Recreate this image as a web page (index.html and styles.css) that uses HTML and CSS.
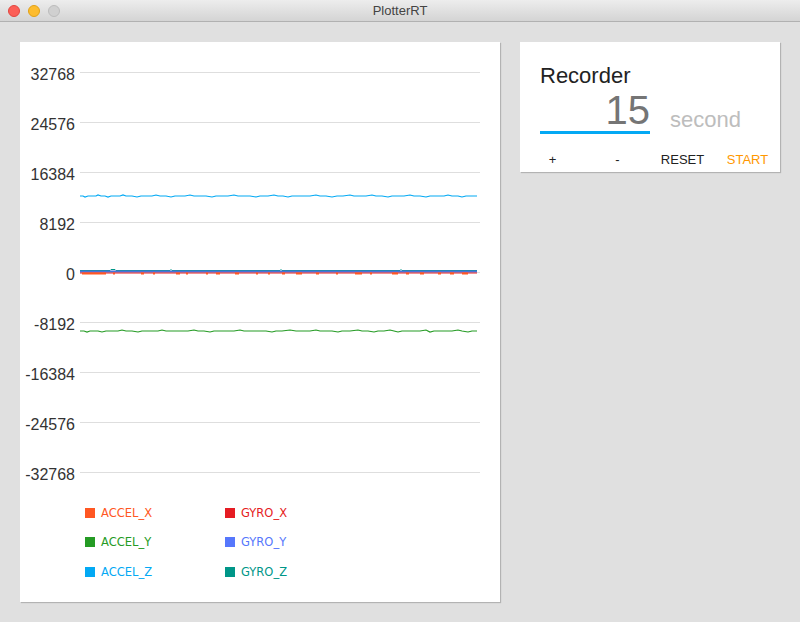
FILE: index.html
```html
<!DOCTYPE html>
<html>
<head>
<meta charset="utf-8">
<title>PlotterRT</title>
<link rel="stylesheet" href="styles.css">
</head>
<body>
<div class="window">
  <header class="titlebar">
    <div class="lights">
      <span class="light red"></span>
      <span class="light yellow"></span>
      <span class="light gray"></span>
    </div>
    <div class="title">PlotterRT</div>
  </header>
  <main class="content">
    <section class="card chart-card">
      <svg class="chart" width="480" height="456" viewBox="0 0 480 456">
        <g class="grid">
          <line x1="60" y1="30.5" x2="460" y2="30.5"/>
          <line x1="60" y1="80.5" x2="460" y2="80.5"/>
          <line x1="60" y1="130.5" x2="460" y2="130.5"/>
          <line x1="60" y1="180.5" x2="460" y2="180.5"/>
          <line x1="60" y1="230.5" x2="460" y2="230.5"/>
          <line x1="60" y1="280.5" x2="460" y2="280.5"/>
          <line x1="60" y1="330.5" x2="460" y2="330.5"/>
          <line x1="60" y1="380.5" x2="460" y2="380.5"/>
          <line x1="60" y1="430.5" x2="460" y2="430.5"/>
        </g>
        <g class="labels">
          <text x="55" y="38">32768</text>
          <text x="55" y="88">24576</text>
          <text x="55" y="138">16384</text>
          <text x="55" y="188">8192</text>
          <text x="55" y="238">0</text>
          <text x="55" y="288">-8192</text>
          <text x="55" y="338">-16384</text>
          <text x="55" y="388">-24576</text>
          <text x="55" y="438">-32768</text>
        </g>
        <polyline class="s accel-z" points="60,154 63,154 65,155 68,154 72,154 76,154 78,153 81,154 85,154 88,155 91,154 96,154 100,154 103,153 106,154 112,154 117,155 121,154 127,154 132,154 136,153 140,154 146,154 151,155 155,154 160,154 165,154 170,153 174,154 180,154 186,154 192,155 196,154 203,154 208,154 214,153 218,154 224,154 230,154 236,155 240,154 248,154 254,153 258,154 263,154 268,155 272,154 278,154 284,154 290,154 296,153 300,154 306,154 312,155 317,154 323,154 330,153 334,154 340,154 346,154 352,153 356,154 362,154 368,155 372,154 378,154 384,154 390,153 394,154 400,154 406,155 410,154 416,154 424,154 428,153 432,154 438,154 442,155 446,154 452,154 457,154"/>
        <polyline class="s accel-y" points="60,289 64,289 67,290 70,289 74,289 78,289 82,290 86,289 92,289 98,289 102,288 106,289 112,289 118,290 122,289 126,289 132,289 138,289 142,288 146,289 152,289 160,289 168,289 174,288 178,289 184,289 190,290 194,289 200,289 208,289 214,289 220,288 224,289 230,289 238,289 246,289 252,290 256,289 262,289 270,288 276,289 282,289 290,289 296,288 300,289 306,289 312,289 318,290 322,289 330,289 338,288 342,289 348,289 354,290 358,289 364,289 370,288 374,289 378,290 382,289 388,289 394,289 400,289 406,288 410,290 414,289 420,289 426,289 432,289 438,288 442,289 448,290 452,289 457,289"/>
        <polyline class="s gyro-z" points="60,228.5 90,228.5 91,227.5 95,227.5 96,228.5 150,228.5 151,227.5 152,228.5 260,228.5 261,227.5 262,228.5 380,228.5 381,227.5 382,228.5 457,228.5"/>
        <line class="s gyro-y" x1="60" y1="229.5" x2="457" y2="229.5"/>
        <line class="s gyro-x" x1="60" y1="231" x2="457" y2="231"/>
        <path class="s accel-x" d="M62 231.5 H86 M93 231.5 H95 M121 231.5 H124 M133 231.5 H135 M156 231.5 H160 M166 231.5 H168 M186 231.5 H188 M196 231.5 H200 M215 231.5 H219 M236 231.5 H238 M248 231.5 H250 M262 231.5 H265 M276 231.5 H282 M296 231.5 H299 M316 231.5 H318 M335 231.5 H342 M350 231.5 H352 M372 231.5 H378 M386 231.5 H389 M400 231.5 H404 M418 231.5 H421 M430 231.5 H434 M442 231.5 H448"/>
      </svg>
      <ul class="legend">
        <li class="item c-accel-x"><span class="swatch"></span>ACCEL_X</li>
        <li class="item c-gyro-x"><span class="swatch"></span>GYRO_X</li>
        <li class="item c-accel-y"><span class="swatch"></span>ACCEL_Y</li>
        <li class="item c-gyro-y"><span class="swatch"></span>GYRO_Y</li>
        <li class="item c-accel-z"><span class="swatch"></span>ACCEL_Z</li>
        <li class="item c-gyro-z"><span class="swatch"></span>GYRO_Z</li>
      </ul>
    </section>
    <section class="card recorder">
      <h1 class="rec-title">Recorder</h1>
      <div class="input-row">
        <div class="field">15</div>
        <span class="unit">second</span>
      </div>
      <div class="buttons">
        <button class="btn">+</button>
        <button class="btn">-</button>
        <button class="btn">RESET</button>
        <button class="btn start">START</button>
      </div>
    </section>
  </main>
</div>
</body>
</html>
```

FILE: styles.css
```css
html, body {
  margin: 0;
  padding: 0;
}
body {
  width: 800px;
  height: 622px;
  overflow: hidden;
  background: #e0e0e0;
  font-family: "Liberation Sans", Arial, sans-serif;
}
.window {
  width: 800px;
  height: 622px;
  display: flex;
  flex-direction: column;
}
.titlebar {
  height: 21px;
  border-bottom: 1px solid #b1b1b1;
  background: linear-gradient(#ededed, #d4d4d4);
  position: relative;
  display: flex;
  align-items: center;
  justify-content: center;
}
.lights {
  position: absolute;
  left: 8px;
  top: 5px;
  display: flex;
  gap: 8px;
}
.light {
  width: 12px;
  height: 12px;
  border-radius: 50%;
  box-sizing: border-box;
}
.light.red { background: #fc5f57; border: 1px solid #e2463f; }
.light.yellow { background: #fdbc2e; border: 1px solid #e1a116; }
.light.gray { background: #d0d0d0; border: 1px solid #bcbcbc; }
.title {
  font-size: 13px;
  color: #444;
  line-height: 21px;
}
.content {
  padding: 20px;
  display: flex;
  align-items: flex-start;
  gap: 20px;
}
.card {
  background: #fff;
  box-shadow: 1px 1px 1px rgba(0, 0, 0, 0.2);
}
.chart-card {
  width: 480px;
  height: 560px;
}
.chart {
  display: block;
}
.grid line {
  stroke: #dedede;
  stroke-width: 1;
}
.labels text {
  font-family: "Liberation Sans", Arial, sans-serif;
  font-size: 16px;
  fill: #333;
  text-anchor: end;
}
.s {
  fill: none;
  stroke-width: 1.2;
}
.accel-z { stroke: #03a9f4; }
.accel-y { stroke: #259b24; }
.gyro-z { stroke: #009688; stroke-width: 1; }
.gyro-y { stroke: #4a72d8; stroke-width: 2; }
.gyro-x { stroke: #e51c23; stroke-width: 1; }
.accel-x { stroke: #ff5722; stroke-width: 2; }
.legend {
  list-style: none;
  margin: 0;
  padding: 0 0 0 65px;
  display: grid;
  grid-template-columns: 140px 140px;
  grid-auto-rows: 29.5px;
}
.item {
  display: flex;
  align-items: center;
  gap: 6px;
  font-family: "DejaVu Sans", sans-serif;
  font-size: 11.5px;
}
.swatch {
  width: 10px;
  height: 10px;
  background: currentColor;
}
.c-accel-x { color: #ff5722; }
.c-gyro-x { color: #e51c23; }
.c-accel-y { color: #259b24; }
.c-gyro-y { color: #5677fc; }
.c-accel-z { color: #03a9f4; }
.c-gyro-z { color: #009688; }
.recorder {
  width: 260px;
  box-sizing: border-box;
  padding: 21px 20px 0;
}
.rec-title {
  margin: 0;
  font-size: 22px;
  font-weight: normal;
  line-height: 26px;
  color: #222;
}
.input-row {
  display: flex;
  align-items: flex-end;
}
.field {
  width: 110px;
  box-sizing: border-box;
  text-align: right;
  font-size: 40px;
  line-height: 40px;
  color: #757575;
  padding: 1px 0 1px;
  border-bottom: 3px solid #03a9f4;
}
.unit {
  margin-left: 20px;
  font-size: 22px;
  line-height: 22px;
  color: #bdbdbd;
  margin-bottom: 3px;
}
.buttons {
  margin: 13px -20px 0;
  display: flex;
}
.btn {
  flex: 1;
  height: 25px;
  border: none;
  background: none;
  padding: 0;
  font-family: "Liberation Sans", Arial, sans-serif;
  font-size: 13px;
  color: #222;
}
.btn.start {
  color: #ff9800;
}
```
